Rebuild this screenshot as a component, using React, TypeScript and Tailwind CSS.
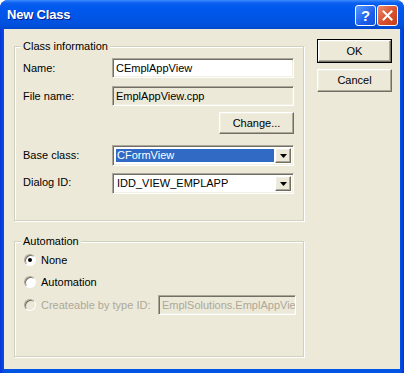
import React from "react";

const sunken =
  "border border-t-[#ACA899] border-l-[#ACA899] border-b-white border-r-white shadow-[inset_1px_1px_0_#716F64,inset_-1px_-1px_0_#F1EFE2]";
const raised =
  "border border-t-white border-l-white border-b-[#716F64] border-r-[#716F64] shadow-[inset_-1px_-1px_0_#ACA899,inset_1px_1px_0_#F1EFE2]";

function Group({ title, className, children }: { title: string; className?: string; children: React.ReactNode }) {
  return (
    <div className={`relative border border-[#D0D0BF] shadow-[inset_1px_1px_0_#fff,1px_1px_0_#fff] ${className ?? ""}`}>
      <span className="absolute -top-[8px] left-[6px] bg-[#ECE9D8] px-[2px] leading-[14px]">{title}</span>
      {children}
    </div>
  );
}

function Edit({ value, readOnly, className }: { value: string; readOnly?: boolean; className?: string }) {
  return (
    <div
      className={`h-[20px] flex items-center pl-[3px] ${sunken} ${readOnly ? "bg-[#ECE9D8]" : "bg-white"} ${className ?? ""}`}
    >
      {value}
    </div>
  );
}

function Combo({ value, selected }: { value: string; selected?: boolean }) {
  return (
    <div className={`h-[21px] w-[182px] flex bg-white p-[2px] ${sunken}`}>
      <div className="flex-1 p-[1px]">
        <div className={`h-full flex items-center pl-[1px] ${selected ? "bg-[#316AC5] text-white" : ""}`}>{value}</div>
      </div>
      <div className={`w-[16px] flex items-center justify-center bg-[#ECE9D8] ${raised}`}>
        <svg width="7" height="4" viewBox="0 0 7 4">
          <path d="M0 0h7L3.5 4z" fill="#000" />
        </svg>
      </div>
    </div>
  );
}

function Button({ children, isDefault, className }: { children: React.ReactNode; isDefault?: boolean; className?: string }) {
  return (
    <div className={`${isDefault ? "border border-black" : ""} ${className ?? ""}`}>
      <div className={`h-full flex items-center justify-center bg-[#ECE9D8] ${raised}`}>{children}</div>
    </div>
  );
}

function Radio({ label, checked, disabled }: { label: string; checked?: boolean; disabled?: boolean }) {
  return (
    <div className={`h-[16px] flex items-center gap-[5px] ${disabled ? "text-[#ACA899]" : ""}`}>
      <div
        className={`w-[12px] h-[12px] rounded-full flex items-center justify-center border border-t-[#ACA899] border-l-[#ACA899] border-b-white border-r-white shadow-[inset_1px_1px_0_#716F64] ${disabled ? "bg-[#ECE9D8]" : "bg-white"}`}
      >
        {checked && <div className="w-[4px] h-[4px] rounded-full bg-black" />}
      </div>
      <span>{label}</span>
    </div>
  );
}

export default function App() {
  return (
    <div className="w-[404px] h-[373px] flex flex-col rounded-t-[8px] overflow-hidden bg-[linear-gradient(to_right,#0831D9,#0054E3_4px,#0054E3_calc(100%-4px),#0831D9)] font-['Liberation_Sans',Arial,sans-serif] text-[11px] text-black select-none">
      {/* title bar */}
      <div className="h-[29px] flex items-center pl-[7px] pr-[6px] bg-[linear-gradient(to_bottom,#3D8DFF_0px,#0A5FEF_3px,#0058EE_8px,#0055E5_18px,#0050DC_25px,#0048CE_29px)]">
        <span className="flex-1 text-white font-bold text-[13px] tracking-[-0.2px] [text-shadow:1px_1px_0_#0A1E8C]">
          New Class
        </span>
        <div className="flex gap-[1px] mt-[2px]">
          <div className="w-[21px] h-[21px] rounded-[3px] border border-white bg-[linear-gradient(135deg,#5A9BFF,#1C5EEB_60%,#1450D8)] flex items-center justify-center text-white font-bold text-[15px] leading-none">
            ?
          </div>
          <div className="w-[21px] h-[21px] rounded-[3px] border border-white bg-[linear-gradient(135deg,#EC8A6C,#D8502C_55%,#C63F1E)] flex items-center justify-center">
            <svg width="11" height="11" viewBox="0 0 11 11">
              <path d="M1.5 1.5l8 8M9.5 1.5l-8 8" stroke="#fff" strokeWidth="2" strokeLinecap="square" />
            </svg>
          </div>
        </div>
      </div>

      {/* client area */}
      <div className="flex-1 mx-[4px] mb-[4px] bg-[#ECE9D8] flex pl-[10px] pr-[8px] pt-[10px] gap-[13px]">
        <div className="w-[290px] flex flex-col">
          <Group title="Class information" className="mt-[7px] h-[175px] pl-[8px] pr-[9px] pt-[11px]">
            <div className="flex items-center">
              <span className="w-[89px]">Name:</span>
              <Edit value="CEmplAppView" className="w-[182px]" />
            </div>
            <div className="flex items-center mt-[8px]">
              <span className="w-[89px]">File name:</span>
              <Edit value="EmplAppView.cpp" readOnly className="w-[182px]" />
            </div>
            <div className="flex justify-end mt-[6px]">
              <Button className="w-[75px] h-[22px]">Change...</Button>
            </div>
            <div className="flex items-start mt-[11px]">
              <span className="w-[89px] mt-[2px]">Base class:</span>
              <Combo value="CFormView" selected />
            </div>
            <div className="flex items-start mt-[7px]">
              <span className="w-[89px] mt-[1px]">Dialog ID:</span>
              <Combo value="IDD_VIEW_EMPLAPP" />
            </div>
          </Group>

          <Group title="Automation" className="mt-[20px] h-[116px] pl-[9px] pr-[7px] pt-[10px]">
            <div className="flex flex-col">
              <Radio label="None" checked />
              <div className="mt-[6px]">
                <Radio label="Automation" />
              </div>
              <div className="flex items-center mt-[5px]">
                <div className="w-[134px]">
                  <Radio label="Createable by type ID:" disabled />
                </div>
                <Edit
                  value="EmplSolutions.EmplAppVie"
                  readOnly
                  className="w-[138px] text-[#ACA899] overflow-hidden whitespace-nowrap"
                />
              </div>
            </div>
          </Group>
        </div>

        <div className="w-[75px] flex flex-col gap-[6px]">
          <Button isDefault className="h-[24px]">
            OK
          </Button>
          <Button className="h-[23px]">Cancel</Button>
        </div>
      </div>
    </div>
  );
}
